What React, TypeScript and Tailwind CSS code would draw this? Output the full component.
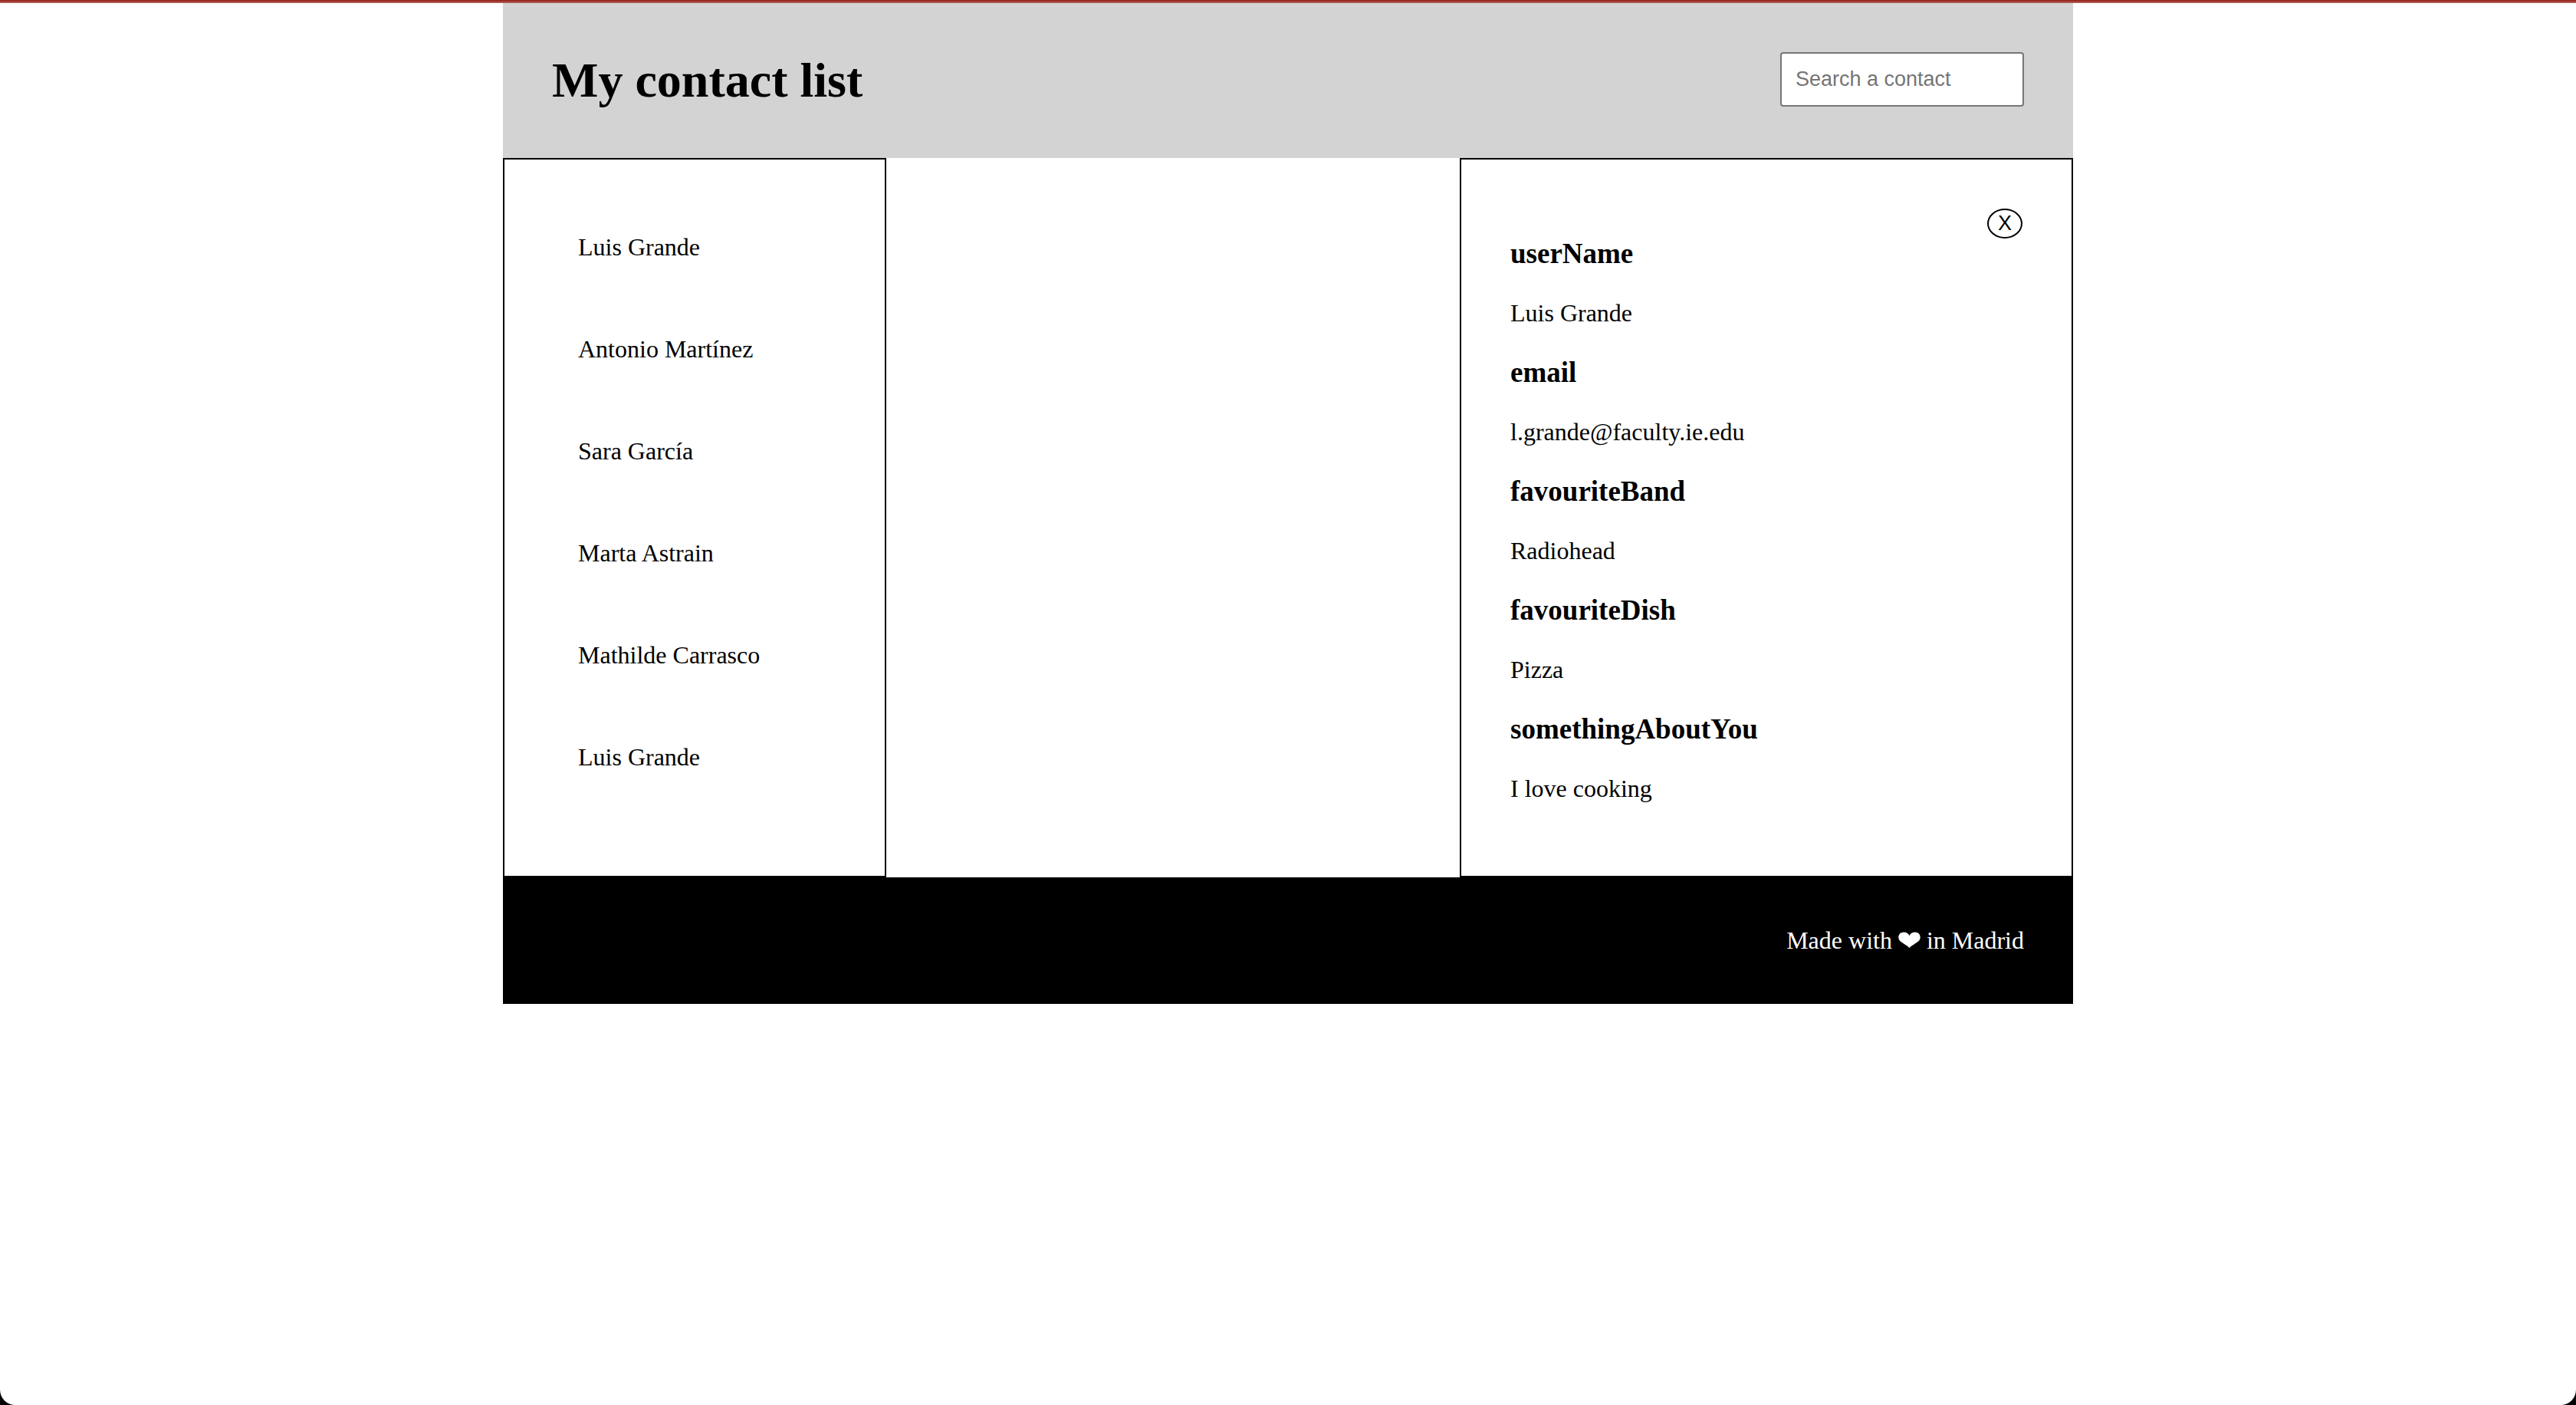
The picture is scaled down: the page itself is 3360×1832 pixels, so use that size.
import { useState } from "react";

const contacts = [
  "Luis Grande",
  "Antonio Martínez",
  "Sara García",
  "Marta Astrain",
  "Mathilde Carrasco",
  "Luis Grande",
];

const details = [
  ["userName", "Luis Grande"],
  ["email", "l.grande@faculty.ie.edu"],
  ["favouriteBand", "Radiohead"],
  ["favouriteDish", "Pizza"],
  ["somethingAboutYou", "I love cooking"],
];

function Heart() {
  return (
    <svg
      role="img"
      aria-label="love"
      viewBox="0 0 29 22"
      className="inline-block h-[22px] w-[29px] align-baseline"
      fill="currentColor"
    >
      <path d="M14.5 21C13.4 19.4 11.4 18.1 8.6 16.4C4 13.7 0.3 11.6 0.3 7.1C0.3 3.3 3.2 0.5 7.1 0.5C10.6 0.5 13.6 2.3 14.5 5C15.4 2.3 18.4 0.5 21.9 0.5C25.8 0.5 28.7 3.3 28.7 7.1C28.7 11.6 25 13.7 20.4 16.4C17.6 18.1 15.6 19.4 14.5 21Z" />
    </svg>
  );
}

export default function App() {
  const [query, setQuery] = useState("");

  return (
    <div className="flex min-h-screen flex-col bg-black font-['Liberation_Serif',serif] text-[32px] leading-[37px] text-black">
      <div className="grow rounded-b-[20px] border-t-2 border-[#992a24] bg-white">
        <div className="h-[2px] bg-[#ad5651]" />
        <div className="mx-auto max-w-[2048px]">
          <header className="flex items-start justify-between bg-[#d3d3d3] p-16">
            <h1 className="text-[64px] leading-[74px] font-bold">My contact list</h1>
            <input
              type="text"
              aria-label="Search a contact"
              placeholder="Search a contact"
              value={query}
              onChange={(event) => setQuery(event.target.value)}
              className="h-[71px] w-[318px] rounded-[4px] border-2 border-[#767676] bg-white px-[18px] font-['Liberation_Sans',sans-serif] text-[27px] leading-[31px] placeholder:text-[#757575]"
            />
          </header>

          <main className="flex justify-between">
            <ul className="w-[500px] shrink-0 border-2 border-black p-12">
              {contacts.map((name, index) => (
                <li key={index} className="p-12">
                  {name}
                </li>
              ))}
            </ul>

            <section className="flex w-[800px] items-start justify-between border-2 border-black px-16 pt-16 pb-[95px]">
              <dl>
                {details.map(([label, value]) => (
                  <div key={label}>
                    <dt className="pt-[37px] text-[37px] leading-[43px] font-bold">{label}</dt>
                    <dd className="pt-[38px]">{value}</dd>
                  </div>
                ))}
              </dl>
              <button
                type="button"
                aria-label="Close"
                className="flex h-[39px] w-[46px] items-center justify-center rounded-[50%] border-2 border-black font-['Liberation_Sans',sans-serif] text-[27px] leading-[31px]"
              >
                X
              </button>
            </section>
          </main>

          <footer className="bg-black p-16 text-right text-white">
            <p>
              Made with <Heart /> in Madrid
            </p>
          </footer>
        </div>
      </div>
    </div>
  );
}
